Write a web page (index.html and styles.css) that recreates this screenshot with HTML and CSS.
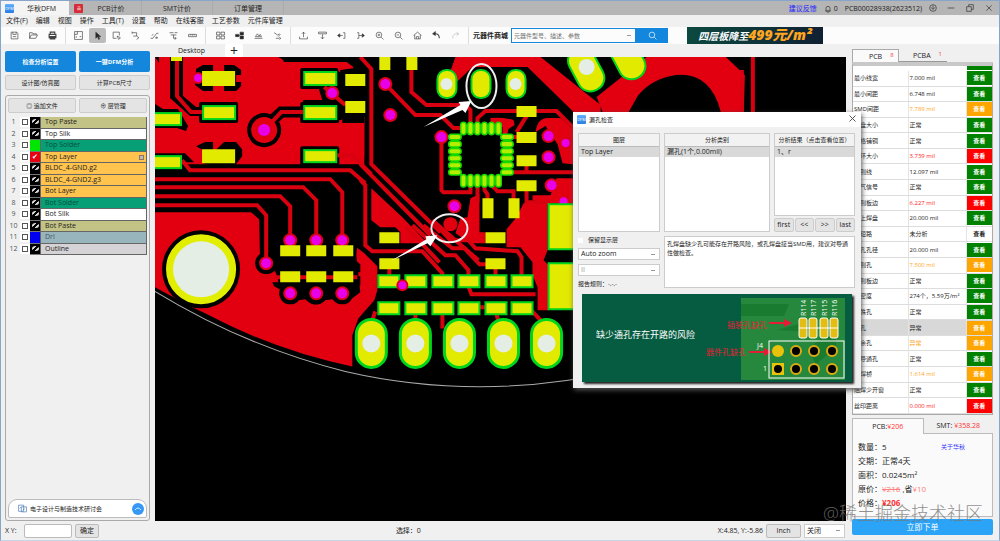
FILE: index.html
```html
<!DOCTYPE html>
<html lang="zh-CN">
<head>
    <meta charset="UTF-8">
    <meta name="viewport" content="width=device-width, initial-scale=1.0">
    <title>华秋DFM</title>
    <link rel="stylesheet" href="styles.css">
</head>
<body>
<div class="window">
    <header class="titlebar">
        <a class="tab active" href="#"><span class="logo">DFM</span><span>华秋DFM</span></a>
        <a class="tab first" href="#"><span class="logo red">品</span><span>PCB计价</span></a>
        <a class="tab" href="#">SMT计价</a>
        <a class="tab" href="#">订单管理</a>
        <div class="account">
            <a class="feedback" href="#">建议反馈</a>
            <span class="bell"><svg class="icon" viewBox="0 0 12 12"><path d="M3 9V5a3 3 0 0 1 6 0v4zM2 9h8M5 11h2"/></svg> 0</span>
            <span>PCB00028938(2623512)</span>
            <svg class="icon" viewBox="0 0 12 12"><circle cx="6" cy="6" r="5"/><path d="M3 5l3 3 3-3M6 2v6"/></svg>
        </div>
        <div class="win-buttons">
            <button aria-label="最小化"><svg class="icon" viewBox="0 0 12 12"><path d="M1 6h10"/></svg></button>
            <button aria-label="还原"><svg class="icon" viewBox="0 0 12 12"><path d="M1 4h7v7H1zM4 4V1h7v7H8"/></svg></button>
            <button aria-label="关闭"><svg class="icon" viewBox="0 0 12 12"><path d="M2 2l8 8M10 2l-8 8"/></svg></button>
        </div>
    </header>

    <nav class="menu">
        <a href="#">文件(F)</a><a href="#">编辑</a><a href="#">视图</a><a href="#">操作</a><a href="#">工具(T)</a><a href="#">设置</a><a href="#">帮助</a><a href="#">在线客服</a><a href="#">工艺参数</a><a href="#">元件库管理</a>
    </nav>

    <div class="toolbar">
        <div class="group">
            <button aria-label="保存"><svg class="icon" viewBox="0 0 16 16"><path d="M2 2h10l2 2v10H2zM5 2v4h6V2M5 10h6"/></svg></button>
            <button aria-label="打开"><svg class="icon" viewBox="0 0 16 16"><path d="M1 13V3h5l1 2h6v2M1 13l3-6h11l-3 6z"/></svg></button>
            <button aria-label="打印"><svg class="icon bold" viewBox="0 0 16 16"><path d="M4 6V2h8v4M2 6h12v6H2zM4 10h8v4H4z"/></svg></button>
        </div>
        <div class="group">
            <button aria-label="视窗"><svg class="icon" viewBox="0 0 16 16"><path d="M1 1h14v14H1zM1 6h5V1M10 10h3M4 12V9"/></svg></button>
            <button class="on" aria-label="选择"><svg class="icon" viewBox="0 0 16 16"><path class="solid" d="M5 2v11l3-3 2 5 2-1-2-4h4z"/></svg></button>
            <button aria-label="框选"><svg class="icon" viewBox="0 0 16 16"><path d="M13 8V2H2v11h6M9 9l6 3-3 3z"/></svg></button>
            <button aria-label="移动"><svg class="icon" viewBox="0 0 16 16"><path d="M2 3h8v6H4M10 9l4 3-4 3M2 1v4"/></svg></button>
            <button aria-label="测量线"><svg class="icon" viewBox="0 0 16 16"><path d="M1 13h4L12 4h3M9 12h5M12 10v4M3 8l3-2"/></svg></button>
            <button aria-label="网络"><svg class="icon" viewBox="0 0 16 16"><path d="M1 3h7M10 3h5M3 7h10M8 7v6h4M10 11l3 2-3 2"/></svg></button>
            <button aria-label="标尺"><svg class="icon" viewBox="0 0 16 16"><path d="M1 6h14v4H1zM5 6v2M8 6v2M11 6v2"/></svg></button>
        </div>
        <div class="group">
            <button aria-label="排列"><svg class="icon" viewBox="0 0 16 16"><path d="M1 2h6v5H1zM9 2h6v5H9zM1 9h6v5H1zM9 9h6v5H9z"/></svg></button>
            <button aria-label="拼板"><svg class="icon" viewBox="0 0 16 16"><path class="solid" d="M1 6h6v4H1zM9 2h6v5H9zM9 9h6v5H9z"/><path d="M7 8h2"/></svg></button>
            <button aria-label="阻抗"><svg class="icon" viewBox="0 0 16 16"><path d="M1 13h14M2 10h12M3 9l3-4 3 4 2-3 2 3"/></svg></button>
            <button aria-label="对比"><svg class="icon" viewBox="0 0 16 16"><path d="M2 3l6 4 4-2M9 10l4-4M5 13h6M11 11l3 2-3 2"/></svg></button>
        </div>
        <div class="group">
            <button aria-label="上移"><svg class="icon" viewBox="0 0 16 16"><path d="M1 10v4h14v-4M8 11V2M5 5l3-3 3 3"/></svg></button>
            <button aria-label="下移"><svg class="icon" viewBox="0 0 16 16"><path d="M1 2h14v3H1zM8 6v8M5 11l3 3 3-3"/></svg></button>
            <button aria-label="左移"><svg class="icon" viewBox="0 0 16 16"><path class="solid" d="M1 8l4-3v6z"/><path d="M4 8h6M11 3h3v10h-3"/></svg></button>
            <button aria-label="右移"><svg class="icon" viewBox="0 0 16 16"><path class="solid" d="M15 8l-4-3v6z"/><path d="M5 8h6M2 3h3v10H2"/></svg></button>
            <button aria-label="放大"><svg class="icon" viewBox="0 0 16 16"><circle cx="7" cy="7" r="5"/><path d="M11 11l4 4M7 5v4M5 7h4"/></svg></button>
            <button aria-label="缩小"><svg class="icon" viewBox="0 0 16 16"><circle cx="7" cy="7" r="5"/><path d="M11 11l4 4M5 7h4"/></svg></button>
            <button aria-label="主页"><svg class="icon" viewBox="0 0 16 16"><path d="M1 8l7-6 7 6M3 7v7h10V7M6 14v-4h4v4"/></svg></button>
            <button aria-label="撤销"><svg class="icon" viewBox="0 0 16 16"><path class="solid" d="M1 5l5-4v7z"/><path class="thick" d="M4 5c6-1 9 2 9 8"/></svg></button>
            <button aria-label="重做"><svg class="icon pale" viewBox="0 0 16 16"><path d="M10 2l4 3-4 3M13 5C6 4 3 7 3 13"/></svg></button>
        </div>
        <form class="search">
            <label for="part">元器件商城</label>
            <span class="search-box"><input id="part" type="text" placeholder="元器件型号、描述、参数"></span>
            <button type="button" aria-label="搜索"><svg class="icon" viewBox="0 0 16 16"><circle cx="7" cy="7" r="5"/><path d="M11 11l4 4"/></svg></button>
        </form>
        <a class="promo" href="#">四层板降至<b>499元/m²</b></a>
    </div>

    <main class="main">
        <aside class="left">
            <div class="pair primary"><button>检查分析设置</button><button>一键DFM分析</button></div>
            <div class="pair"><button>设计图/仿真图</button><button>计算PCB尺寸</button></div>
            <section class="layers">
                <div class="pair"><button>◎ 追加文件</button><button>⊕ 层管理</button></div>
                <ol class="layer-list">
                    <li><span>1</span><input type="checkbox" aria-label="Top Paste"><i class="eye"></i><b class="paste">Top Paste</b></li>
                    <li><span>2</span><input type="checkbox" aria-label="Top Silk"><i class="eye"></i><b>Top Silk</b></li>
                    <li><span>3</span><input type="checkbox" aria-label="Top Solder"><i class="green"></i><b class="solder">Top Solder</b></li>
                    <li><span>4</span><input type="checkbox" aria-label="Top Layer"><i class="red">✔</i><b class="copper">Top Layer<em></em></b></li>
                    <li><span>5</span><input type="checkbox" aria-label="BLDC_4-GND.g2"><i class="eye"></i><b class="copper">BLDC_4-GND.g2</b></li>
                    <li><span>6</span><input type="checkbox" aria-label="BLDC_4-GND2.g3"><i class="eye"></i><b class="copper">BLDC_4-GND2.g3</b></li>
                    <li><span>7</span><input type="checkbox" aria-label="Bot Layer"><i class="eye"></i><b class="copper">Bot Layer</b></li>
                    <li><span>8</span><input type="checkbox" aria-label="Bot Solder"><i class="eye"></i><b class="solder">Bot Solder</b></li>
                    <li><span>9</span><input type="checkbox" aria-label="Bot Silk"><i class="eye"></i><b>Bot Silk</b></li>
                    <li><span>10</span><input type="checkbox" aria-label="Bot Paste"><i class="eye"></i><b class="paste">Bot Paste</b></li>
                    <li><span>11</span><input type="checkbox" aria-label="Drl"><i class="blue"></i><b class="drill">Drl</b></li>
                    <li><span>12</span><input type="checkbox" aria-label="Outline"><i class="eye"></i><b class="outline">Outline</b></li>
                </ol>
                <a class="notice" href="#">
                    <svg class="icon" viewBox="0 0 16 16"><path d="M1 2h9v11H1zM6 5h9v9H6zM3 8l3-3M9 11l3-3"/></svg>
                    <span>电子设计与制造技术研讨会</span>
                    <svg class="up" viewBox="0 0 12 12"><circle cx="6" cy="6" r="6"/><path d="M3 7q3-4 6 0"/></svg>
                </a>
            </section>
        </aside>

        <section class="work">
            <div class="desk-tabs"><a href="#">Desktop</a><button aria-label="新建">+</button></div>
            <svg class="board" viewBox="155 57 690 464" preserveAspectRatio="xMinYMin slice">
                <rect x="155" y="57" width="690" height="464"/>
                <!-- copper pour -->
                <g class="cu">
                    <path d="M155 57H278L286 61H345L353 67V73H341L336 70H303L302 87H318L322 100H303L301 120H341L345 116H364V165H155zM155 212H251L260 220V257Q253 264 260 271L275 271 279 282 283 297Q290 307 298 300L305 299Q315 309 325 300L332 299Q342 309 352 298L360 292 357 264 355 246 364 253 377 266V290L374 300 358 318 352 335V366Q275 350 205 313L190 306 155 287z"/>
                    <path d="M371 188L402 217 427 243H400V232L395 227H380L371 220z"/>
                    <path d="M470 198L479 194V232H485V243H470L455 233 460 218 467 217z"/>
                    <path d="M523 203H547V250L543 260 548 265V310H537V287L532 275V262L520 247H506V229L516 217z"/>
                    <path d="M556 178H573V203H545L532 200V195H550z"/>
                    <path d="M455 57H540L600 105V112H573L527 67H472L450 88H444z"/>
                    <path d="M535 132Q537 118 547 118H560L573 130V164L562 163 557 144 545 126z"/>
                    <path d="M573 92L600 112H573zM646 57H725L744 75 743 112H720Q710 72 675 75 650 79 637 96L628 112H602L596 97z"/>
                    <path d="M360 117H364V155H360zM490 118Q502 117 513 120L514 125 508 129 506 137H502V127L490 125z"/>
                </g>
                <!-- clearances -->
                <g class="gap">
                    <path d="M170 57H183V96L196 107H203V116H190L170 98zM155 104L163 109H178L188 126 186 131 177 128H155zM155 57H159V63zM155 153H185L194 162H155zM196 69L203 65H213V72H202V85H213V91H203L195 85zM224 65H234L241 70V75H236V82H241V86L236 91H224zM196 146L205 151H213V142H205zM224 142H236L242 149V156L235 165H212L202 163z"/>
                    <rect x="199" y="102" width="39" height="21" rx="2"/><rect x="300" y="68" width="38" height="21" rx="2"/><rect x="300" y="102" width="39" height="21" rx="2"/><rect x="300" y="146" width="39" height="20" rx="2"/>
                    <path d="M281 57H355L364 65V123H342V116L349 110 335 99 340 88V70L355 68 350 62H284zM155 164H360L365 173V251L357 247 355 260 360 264V272H345V276H360V285L350 291H283L274 286 272 282H278V260L260 268 259 216 252 210H155z"/>
                    <circle cx="264" cy="130" r="17"/><circle cx="266" cy="263" r="11"/><circle cx="201" cy="269" r="39"/>
                    <circle cx="290" cy="293" r="11"/><circle cx="316" cy="293" r="11"/><circle cx="342" cy="293" r="11"/>
                    <path class="edge" d="M268 124L281 112H300"/>
                </g>
                <g class="trace">
                    <path d="M177 57V96L191 112H203M182 160L190 170H350L365 183M155 179H330L342 192V238M155 187H303L316 200V238M155 196H280L290 206V238M155 205H257L266 215V260M337 155H352L371 174M268 126L281 112H303M324 87L345 105"/>
                    <path d="M360 57L371 69V164L440 232M360 164L430 235M360 180L365 185V245L372 251H422L442 273V280"/>
                    <path d="M385 84L415 115H440L453 128H462M411 70V92L426 105H465L470 110V124M477 124V118L485 111H556L573 128M441 137V190L443 192H470V180M477 183V202M484 183V190L487 194V202M491 185L497 191H513V201M506 137H520M510 172H573M441 137H455"/>
                    <path d="M526 116L516 132M526 162V172M526 190V202H550M389 242V235M389 268V276M495 268V276M412 225L445 255H455L468 270V277M423 225L452 248H464L479 264H488M436 225L450 240H468L475 248L517 251 521 257V278M468 286L471 294H535M475 307H486M372 320L375 311M415 305V322M442 305V328M494 305L498 322M527 306L543 323"/>
                    <path d="M432 220L478 260M405 226L439 262M741 70V112M752 57V112"/>
                    <path d="M357 277H275M270 277L260 275"/>
                </g>
                <!-- vias -->
                <circle class="cu" cx="264" cy="130" r="13"/>
                <g class="via">
                    <circle cx="264" cy="130" r="6"/><circle cx="266" cy="263" r="5"/><circle cx="290" cy="240" r="5"/><circle cx="316" cy="240" r="5"/><circle cx="342" cy="240" r="5"/>
                    <circle cx="290" cy="293" r="5"/><circle cx="316" cy="293" r="5"/><circle cx="342" cy="293" r="5"/><circle cx="198" cy="78" r="4"/><circle cx="332" cy="93" r="5"/>
                    <circle cx="385" cy="84" r="5"/><circle cx="390" cy="115" r="5"/><circle cx="441" cy="137" r="5"/><circle cx="454" cy="206" r="5"/><circle cx="548" cy="136" r="5"/><circle cx="548" cy="157" r="5"/><circle cx="551" cy="185" r="5"/><circle cx="565" cy="143" r="4"/><circle cx="563" cy="201" r="4"/>
                </g>
                <g class="pad">
                    <path d="M171 57h11v4h-11zM202 71h33v15h-33zM202 149h33v14h-33zM345 74h20v12h-20zM345 101h20v12h-20zM280 245h20v11h-20zM306 245h20v11h-20zM333 245h20v11h-20zM280 271h20v11h-20zM306 271h20v11h-20zM333 271h20v11h-20z"/>
                    <path d="M379 57h11v13h-11zM406 57h11v13h-11zM516 106h20v11h-20zM516 132h20v11h-20zM516 155h20v11h-20zM516 180h20v11h-20zM482 198h11v20h-11zM508 198h11v20h-11zM379 232h20v11h-20zM485 232h20v11h-20zM379 258h20v11h-20zM485 258h20v11h-20z"/>
                </g>
                <g class="pad masked">
                    <rect x="203" y="106" width="32" height="13"/><rect x="304" y="72" width="32" height="13"/><rect x="304" y="106" width="32" height="13"/><rect x="304" y="150" width="32" height="12"/><rect x="150" y="113" width="31" height="12"/><rect x="150" y="156" width="31" height="12"/>
                    <path d="M378 275h21v12h-21zM405 275h21v12h-21zM432 275h21v12h-21zM458 275h21v12h-21zM485 275h21v12h-21zM511 275h21v12h-21zM378 302h21v12h-21zM405 302h21v12h-21zM432 302h21v12h-21zM458 302h21v12h-21zM485 302h21v12h-21zM511 302h21v12h-21zM548 204h40v45h-40zM548 263h40v46h-40z"/>
                    <rect x="437" y="70" width="19" height="28" rx="9"/><rect x="471" y="70" width="19" height="28" rx="9"/><rect x="506" y="70" width="19" height="28" rx="9"/>
                    <rect x="572" y="46" width="27" height="46" rx="13" transform="rotate(-28 586 69)"/><rect x="613" y="34" width="27" height="46" rx="13" transform="rotate(-28 627 57)"/>
                </g>
                <g class="pad masked large">
                    <rect x="356" y="319" width="30" height="48" rx="15"/><rect x="400" y="319" width="30" height="48" rx="15"/><rect x="444" y="319" width="30" height="48" rx="15"/><rect x="488" y="319" width="30" height="48" rx="15"/><rect x="531" y="319" width="30" height="48" rx="15"/>
                </g>
                <g class="via"><circle cx="402" cy="285" r="4"/></g>
                <!-- QFN pins -->
                <g class="pins">
                    <path d="M463 125v7M470 125v7M477 125v7M484 125v7M491 125v7M498 125v7M463 177v7M470 177v7M477 177v7M484 177v7M491 177v7M498 177v7M451 137h7M451 144h7M451 151h7M451 158h7M451 165h7M451 172h7M503 137h7M503 144h7M503 151h7M503 158h7M503 165h7M503 172h7"/>
                    <path class="core" d="M463 125v7M470 125v7M477 125v7M484 125v7M491 125v7M498 125v7M463 177v7M470 177v7M477 177v7M484 177v7M491 177v7M498 177v7M451 137h7M451 144h7M451 151h7M451 158h7M451 165h7M451 172h7M503 137h7M503 144h7M503 151h7M503 158h7M503 165h7M503 172h7"/>
                </g>
                <circle class="ring" cx="201" cy="269" r="31"/>
                <g class="hole">
                    <circle cx="201" cy="269" r="28"/><circle cx="446" cy="84" r="6"/><circle cx="515" cy="84" r="6"/><circle cx="586" cy="67" r="8"/>
                    <circle cx="371" cy="343" r="9"/><circle cx="415" cy="343" r="9"/><circle cx="459" cy="343" r="9"/><circle cx="503" cy="343" r="9"/><circle cx="546" cy="343" r="9"/>
                </g>
                <circle class="cu" cx="450" cy="224" r="7"/>
                <path class="contour" d="M155 291Q245 346 345 371 480 402 620 370"/>
                <g class="mark">
                    <ellipse cx="481" cy="86" rx="15" ry="22"/><ellipse cx="449" cy="228" rx="18" ry="14"/>
                    <path d="M423 127L462 110 465 113 471 101 458 102 460 105zM390 261L427 243 430 246 437 235 425 236 426 239z"/>
                </g>
            </svg>
        </section>

        <aside class="right">
            <div class="result-tabs"><a class="active" href="#">PCB<sup>8</sup></a><a href="#">PCBA<sup>1</sup></a></div>
            <div class="results">
                <table>
                    <tr><td>最小线宽</td><td>7.000 mil</td><td><button>查看</button></td></tr>
                    <tr><td>最小间距</td><td>6.748 mil</td><td><button>查看</button></td></tr>
                    <tr class="warn"><td>SMD间距</td><td>7.789 mil</td><td><button>查看</button></td></tr>
                    <tr><td>焊盘大小</td><td>正常</td><td><button>查看</button></td></tr>
                    <tr><td>网格铺铜</td><td>正常</td><td><button>查看</button></td></tr>
                    <tr class="bad"><td>孔环大小</td><td>3.739 mil</td><td><button>查看</button></td></tr>
                    <tr><td>孔到线</td><td>12.097 mil</td><td><button>查看</button></td></tr>
                    <tr><td>电气信号</td><td>正常</td><td><button>查看</button></td></tr>
                    <tr class="bad"><td>铜到板边</td><td>6.227 mil</td><td><button>查看</button></td></tr>
                    <tr><td>孔上焊盘</td><td>20.000 mil</td><td><button>查看</button></td></tr>
                    <tr class="none"><td>开短路</td><td>未分析</td><td><button>查看</button></td></tr>
                    <tr><td>钻孔孔径</td><td>20.000 mil</td><td><button>查看</button></td></tr>
                    <tr class="warn"><td>孔到孔</td><td>7.500 mil</td><td><button>查看</button></td></tr>
                    <tr><td>孔到板边</td><td>正常</td><td><button>查看</button></td></tr>
                    <tr><td>孔密度</td><td>274个，5.59万/m²</td><td><button>查看</button></td></tr>
                    <tr><td>特殊孔</td><td>正常</td><td><button>查看</button></td></tr>
                    <tr class="warn current"><td>漏孔</td><td>异常</td><td><button>查看</button></td></tr>
                    <tr class="warn"><td>多余孔</td><td>异常</td><td><button>查看</button></td></tr>
                    <tr><td>非导通孔</td><td>正常</td><td><button>查看</button></td></tr>
                    <tr class="warn"><td>阻焊桥</td><td>1.614 mil</td><td><button>查看</button></td></tr>
                    <tr><td>阻焊少开窗</td><td>正常</td><td><button>查看</button></td></tr>
                    <tr class="bad"><td>丝印距离</td><td>0.000 mil</td><td><button>查看</button></td></tr>
                </table>
            </div>
            <div class="price-tabs"><a class="active" href="#">PCB:<span>¥206</span></a><a href="#">SMT: <span>¥358.28</span></a></div>
            <div class="price">
                <a href="#">关于华秋</a>
                <p>数量：5</p>
                <p>交期：正常4天</p>
                <p>面积：0.0245m²</p>
                <p>原价：<s>¥216</s> ,省<span>¥10</span></p>
                <p>价格：<b>¥206</b></p>
            </div>
            <button class="order">立即下单</button>
        </aside>
    </main>

    <footer class="status">
        <label for="xy">X Y:</label><input id="xy" type="text"><button>确定</button>
        <span class="picked">选择：0</span>
        <span class="coords">X:4.85, Y:-5.86</span>
        <button class="unit">Inch</button>
        <select aria-label="捕捉"><option>关闭</option></select>
    </footer>

    <div class="dialog" role="dialog" aria-labelledby="dialog-title">
        <div class="dialog-title"><span class="logo">DFM</span><span id="dialog-title">漏孔检查</span><button aria-label="关闭"><svg class="icon" viewBox="0 0 12 12"><path d="M2 2l8 8M10 2l-8 8"/></svg></button></div>
        <div class="dialog-body">
            <div class="lists">
                <div class="list"><h3>图层</h3><p>Top Layer</p></div>
                <div class="list"><h3>分析类别</h3><p>漏孔(1个,0.00mil)</p></div>
                <div class="list-col">
                    <div class="list"><h3>分析结果（点击查看位置）</h3><p>1、r</p></div>
                    <div class="pager"><button>first</button><button>&lt;&lt;</button><button>&gt;&gt;</button><button>last</button></div>
                </div>
            </div>
            <div class="options">
                <div class="fields">
                    <label><input type="checkbox"> 保留显示层</label>
                    <select aria-label="缩放"><option>Auto zoom</option></select>
                    <select class="dim" aria-label="编号"><option>II</option></select>
                    <span>报告规则：-,-,-</span>
                </div>
                <p class="hint">孔焊盘缺少孔可能存在开路风险，或孔焊盘接当SMD用，建议对导通性做检查。</p>
            </div>
            <svg class="sample" viewBox="0 0 270 88">
                <rect class="dark" width="270" height="88"/>
                <rect class="light" x="159" y="4" width="104" height="82"/>
                <path class="shade" d="M159 10h48l-5 12h-43zM195 36l28-8 6 10M226 56l8 14 20-16V30"/>
                <text class="white" x="14" y="44" font-size="9">缺少通孔存在开路的风险</text>
                <g class="crimson">
                    <text x="145" y="34" font-size="8">插装孔缺孔</text><text x="124" y="61" font-size="8">器件孔缺孔</text>
                    <path d="M187 28h15v-3l8 4-8 4v-3h-15zM167 57h15v-3l8 4-8 4v-3h-15z"/>
                </g>
                <g class="white">
                    <text font-size="7" transform="translate(224 22) rotate(-90)">R114</text><text font-size="7" transform="translate(234 22) rotate(-90)">R117</text><text font-size="7" transform="translate(245 22) rotate(-90)">R115</text><text font-size="7" transform="translate(255 22) rotate(-90)">R116</text>
                    <text x="175" y="54" font-size="7">J4</text><text x="181" y="77" font-size="7">1</text>
                </g>
                <g class="chip">
                    <rect x="217" y="24" width="8" height="20" rx="2"/><rect x="227" y="24" width="8" height="20" rx="2"/><rect x="238" y="24" width="8" height="20" rx="2"/><rect x="248" y="24" width="8" height="20" rx="2"/>
                    <path d="M217 34h39"/>
                </g>
                <rect class="frame" x="187" y="47" width="75" height="37"/>
                <circle class="gold" cx="196" cy="57" r="6"/><path class="gold" d="M190 69h12v12h-12z"/><circle cx="196" cy="75" r="4"/>
                <g class="thru"><circle cx="214" cy="57" r="5"/><circle cx="232" cy="57" r="5"/><circle cx="250" cy="57" r="5"/><circle cx="214" cy="75" r="5"/><circle cx="232" cy="75" r="5"/><circle cx="250" cy="75" r="5"/></g>
            </svg>
        </div>
    </div>
    <div class="watermark">@稀土掘金技术社区</div>
</div>
</body>
</html>
```
FILE: styles.css
```css
* {
    box-sizing: border-box;
}
body {
    margin: 0;
    font-family: "Open Sans", "Noto Sans CJK SC", sans-serif;
    font-size: 7px;
    line-height: 10px;
    color: #222;
}
button, input, select {
    font: inherit;
    color: inherit;
    margin: 0;
    padding: 0;
}
button {
    border: 1px solid #ccc;
    border-radius: 2px;
    background: #e4e4e4;
    white-space: nowrap;
}
a {
    color: inherit;
    text-decoration: none;
}
p, h3 {
    margin: 0;
    font-weight: normal;
}
select {
    appearance: none;
    border: 1px solid #ccc;
    padding: 0 2px;
    font-size: 7px;
    background: #fff linear-gradient(#999, #999) right 4px center / 4px 1px no-repeat;
}
.window {
    position: relative;
    display: flex;
    flex-direction: column;
    height: 100vh;
    background: #f0f0f0;
    border: 1px solid #87a5c8;
    border-bottom-color: #c5d5ea;
    overflow: hidden;
}
.icon {
    width: 9px;
    height: 9px;
    fill: none;
    stroke: #444;
    stroke-width: 1.2;
}
.icon .solid {
    fill: #222;
}
.icon .thick, .icon.bold {
    stroke-width: 2;
}
.icon.pale {
    stroke: #bbb;
}
.logo {
    width: 9px;
    height: 9px;
    border-radius: 1px;
    background: linear-gradient(#61b1ff, #287be0);
    color: #fff;
    font-size: 4px;
    line-height: 9px;
    text-align: center;
    flex: none;
}
.logo.red {
    background: #d62b38;
}

/* title bar and menu */
.titlebar {
    display: flex;
    flex: none;
    height: 14px;
    background: #b5b5b5;
    line-height: 13px;
}
.tab {
    display: flex;
    align-items: center;
    justify-content: center;
    width: 71px;
    border-right: 1px solid #aaa;
}
.tab.active {
    width: 68px;
    gap: 13px;
    padding-right: 9px;
    background: #f4f4f4;
    border: 0;
}
.tab.first {
    width: 73px;
    gap: 14px;
    padding-right: 11px;
}
.account {
    display: flex;
    align-items: center;
    gap: 7px;
    margin-left: auto;
}
.account .icon, .win-buttons .icon {
    width: 8px;
    height: 8px;
    display: inline-block;
    vertical-align: middle;
}
.feedback {
    color: #2222ff;
}
.win-buttons {
    display: flex;
    gap: 11px;
    padding: 0 6px 0 10px;
}
.win-buttons button, .dialog-title button {
    border: 0;
    background: none;
    line-height: 8px;
}
.menu {
    display: flex;
    flex: none;
    gap: 8px;
    height: 12px;
    padding: 0 5px;
    line-height: 12px;
}

/* toolbar */
.toolbar {
    display: flex;
    flex: none;
    height: 17px;
    background: #fcfcfc;
}
.group {
    display: flex;
    gap: 2px;
    padding: 1px 4px 1px 5px;
    border-right: 1px solid #ddd;
}
.group + .group {
    padding-left: 4px;
}
.group:nth-child(3) {
    padding-left: 6px;
}
.group button {
    display: flex;
    align-items: center;
    justify-content: center;
    width: 17px;
    border: 0;
    background: none;
}
.group button.on {
    background: #bcbcbc;
}
.search {
    display: flex;
    align-items: center;
    padding: 1px 0 1px 4px;
}
.search label {
    width: 38px;
    font-weight: bold;
    white-space: nowrap;
}
.search-box {
    width: 125px;
    height: 15px;
    border: 1px solid #1487dd;
    background: linear-gradient(#999, #999) right 4px center / 4px 1px no-repeat;
}
.search-box input {
    display: block;
    width: 100%;
    height: 13px;
    border: 0;
    padding: 0 2px;
    background: none;
    font-size: 6px;
}
.search button {
    width: 32px;
    height: 15px;
    border: 0;
    border-radius: 0;
    background: #1287dd;
}
.search .icon {
    display: block;
    margin: auto;
    stroke: #fff;
}
.promo {
    width: 136px;
    margin-left: 19px;
    background: linear-gradient(90deg, #0c4940, #102033);
    color: #fff;
    text-align: center;
    font-size: 10px;
    font-style: italic;
    font-weight: bold;
    line-height: 15px;
    white-space: nowrap;
}
.promo b {
    color: #ffa51f;
    font-size: 14px;
}

/* left column */
.main {
    display: flex;
    flex: 1;
    min-height: 0;
}
.left {
    display: flex;
    flex-direction: column;
    gap: 3px;
    width: 154px;
    padding: 7px 5px 0 4px;
}
.pair {
    display: grid;
    grid-template-columns: 1fr 1fr;
    gap: 3px;
    flex: none;
}
.pair button {
    height: 15px;
    font-size: 6px;
}
.primary button {
    height: 21px;
    border: 0;
    background: #1487dc;
    color: #fff;
    font-weight: bold;
}
.layers {
    display: flex;
    flex: 1;
    flex-direction: column;
    margin-top: 2px;
    padding: 2px;
    border: 1px solid #aaa;
    border-radius: 3px;
}
.layer-list {
    display: grid;
    grid-template-rows: repeat(12, 1fr);
    height: 138px;
    margin: 4px 0 0;
    padding: 0;
    list-style: none;
}
.layer-list li {
    display: grid;
    grid-template-columns: 11px 11px 10px 1fr;
    align-items: stretch;
    line-height: 10px;
}
.layer-list span {
    text-align: center;
    color: #555;
}
.layer-list input {
    appearance: none;
    border: 1px solid #555;
    outline: 2px solid #fff;
    outline-offset: 0;
    background: #fff;
    width: 6px;
    height: 6px;
    margin: 2px 3px;
}
.layer-list i {
    background: #000;
    color: #fff;
    font-style: normal;
    text-align: center;
    border-bottom: 1px solid #777;
}
.eye::after {
    content: "";
    display: block;
    width: 7px;
    height: 5px;
    margin: 2px auto;
    border-radius: 50%;
    background: linear-gradient(135deg, #ddd 40%, #000 40%, #000 60%, #ddd 60%);
}
.layer-list .green { background: #00e600; }
.layer-list .red { background: #e60012; }
.layer-list .blue { background: #00e; }
.layer-list b {
    padding-left: 4px;
    border: 1px solid #666;
    border-top: 0;
    background: #fff;
    font-weight: normal;
}
.layer-list .paste { background: #c2c384; }
.layer-list .solder { background: #079f76; color: #064d3c; }
.layer-list .copper { background: #ffc34e; }
.layer-list .drill { background: #98b4bc; color: #456; }
.layer-list .outline { background: #d6d3d6; }
.layer-list em {
    float: right;
    width: 5px;
    height: 5px;
    margin: 3px 2px 0;
    border: 1px solid #876;
    background: #bbb;
}
.notice {
    display: flex;
    align-items: center;
    gap: 3px;
    height: 19px;
    margin-top: auto;
    padding: 0 2px 0 9px;
    background: #fff;
    border: 1px solid #bbb;
    border-radius: 9px 9px 2px 2px;
    font-size: 6px;
}
.notice .icon {
    stroke: #4779b8;
}
.up {
    width: 12px;
    height: 12px;
    margin-left: auto;
    fill: #3598f5;
}
.up path {
    fill: none;
    stroke: #d8ecff;
}

/* board view */
.work {
    display: flex;
    flex: 1;
    flex-direction: column;
    min-width: 0;
}
.desk-tabs {
    display: flex;
    flex: none;
    height: 13px;
    padding-left: 23px;
    line-height: 14px;
}
.desk-tabs a {
    width: 47px;
}
.desk-tabs button {
    width: 18px;
    border: 0;
    background: #fff;
    font-size: 14px;
    line-height: 12px;
}
.board {
    flex: 1;
    width: 100%;
    min-height: 0;
    background: #000;
}
.cu {
    fill: #e20010;
}
.gap .edge {
    fill: none;
    stroke: #000;
    stroke-width: 11;
}
.trace {
    fill: none;
    stroke: #d9000f;
    stroke-width: 4;
}
.via {
    fill: #e800e8;
    stroke: #dc0018;
    stroke-width: 4;
    paint-order: stroke;
}
.pad {
    fill: #e2ea00;
}
.masked {
    stroke: #00d51d;
    stroke-width: 2;
}
.large {
    stroke-width: 3;
}
.pins path {
    fill: none;
    stroke: #13d800;
    stroke-width: 7;
    stroke-linecap: round;
}
.pins .core {
    stroke: #b5ed00;
    stroke-width: 4;
}
.ring {
    fill: none;
    stroke: #e2ee00;
    stroke-width: 8;
}
.hole {
    fill: #e4eee4;
}
.contour {
    fill: none;
    stroke: #aaa;
    stroke-width: 1;
}
.mark {
    fill: #fff;
}
.mark ellipse {
    fill: none;
    stroke: #eee;
    stroke-width: 2;
}

/* results */
.right {
    display: flex;
    flex-direction: column;
    width: 153px;
    padding: 5px 6px 0 6px;
}
.result-tabs {
    display: flex;
    flex: none;
    height: 13px;
    line-height: 14px;
}
.result-tabs a {
    width: 48px;
    padding-left: 14px;
    border-bottom: 1px solid #999;
}
.result-tabs .active {
    width: 47px;
    padding-left: 16px;
    border: 1px solid #aaa;
    border-bottom: 0;
    background: #fafafa;
}
.result-tabs sup {
    margin-left: 8px;
    color: #f33;
    line-height: 0;
    vertical-align: 2px;
}
.results {
    flex: 1;
    min-height: 0;
    padding-top: 5px;
    border: 1px solid #aaa;
    border-top: 4px solid #c8c8c8;
    background: linear-gradient(90deg, #fff 114px, #008200 114px) top / 100% 4px no-repeat, #fff;
}
.results table {
    width: 100%;
    height: 100%;
    table-layout: fixed;
    border-collapse: collapse;
    font-size: 6px;
    line-height: 10px;
}
.results td {
    padding: 0 1px;
    border-bottom: 1px solid #ddd;
    border-right: 1px solid #e4e4e4;
    white-space: nowrap;
}
.results td:first-child {
    width: 55px;
}
.results td:last-child {
    width: 26px;
    padding: 0;
    border-right: 0;
}
.results button {
    display: block;
    width: 100%;
    height: 14px;
    border: 0;
    border-radius: 0;
    background: #008200;
    color: #fff;
    font-weight: bold;
}
.warn td:nth-child(2) { color: #ffa51f; }
.warn button { background: #ffa500; }
.bad td:nth-child(2) { color: #f22; }
.bad button { background: #f00; }
.none button { background: #fff; color: #222; }
.results .current td { background: #d8d8d8; color: #222; }
.price-tabs {
    display: flex;
    flex: none;
    height: 16px;
    margin-top: 3px;
    line-height: 16px;
    text-align: center;
}
.price-tabs a {
    flex: 1;
    border-bottom: 1px solid #bbb;
}
.price-tabs .active {
    border: 1px solid #bbb;
    border-bottom: 0;
    background: #fafafa;
}
.price-tabs span, .price span, .price b {
    color: #f33;
}
.price {
    flex: none;
    padding: 6px 5px;
    border: 1px solid #bbb;
    border-top: 0;
    background: #fafafa;
    font-size: 8px;
    line-height: 14px;
}
.price a {
    float: right;
    margin-right: 22px;
    color: #33f;
    font-size: 6px;
}
.price s, .price span {
    color: #ff8080;
}
.order {
    flex: none;
    height: 16px;
    margin: 2px 0 -14px;
    border: 0;
    background: #2ba3f7;
    color: #fff;
    font-size: 8px;
    z-index: 1;
}

/* status bar */
.status {
    display: flex;
    flex: none;
    align-items: center;
    gap: 3px;
    height: 19px;
    padding-left: 4px;
    padding-right: 154px;
}
.status label {
    width: 16px;
}
.status input {
    width: 48px;
    height: 14px;
    border: 1px solid #bbb;
    border-radius: 2px;
}
.status button {
    width: 24px;
    height: 14px;
    border-color: #bbb;
}
.status .unit {
    width: 35px;
}
.status select {
    width: 41px;
    height: 14px;
}
.picked {
    margin: 0 auto;
}

/* check dialog */
.dialog {
    position: absolute;
    top: 111px;
    right: 138px;
    width: 288px;
    background: #f0f0f0;
    box-shadow: 1px 2px 5px #555;
}
.dialog-title {
    display: flex;
    align-items: center;
    gap: 3px;
    height: 15px;
    padding: 0 4px;
    background: #fff;
}
.dialog-title span {
    font-size: 6px;
}
.dialog-title .logo {
    font-size: 4px;
}
.dialog-title button {
    margin-left: auto;
}
.dialog-body {
    padding: 6px 6px 6px 5px;
}
.lists {
    display: grid;
    grid-template-columns: 82px 1fr 81px;
    gap: 4px;
    height: 99px;
}
.list {
    flex: 1;
    border: 1px solid #ccc;
    background: #fff;
}
.list h3 {
    height: 13px;
    border-bottom: 1px solid #bbb;
    background: #f2f2f2;
    font-size: 6px;
    line-height: 12px;
    text-align: center;
    white-space: nowrap;
}
.list p {
    padding-left: 2px;
    background: #d9d9d9;
}
.list-col {
    display: flex;
    flex-direction: column;
    gap: 2px;
    min-width: 0;
}
.pager {
    display: grid;
    grid-template-columns: repeat(4, 1fr);
    gap: 1px;
}
.pager button {
    height: 14px;
}
.options {
    display: grid;
    grid-template-columns: 82px 1fr;
    gap: 4px;
    margin-top: 4px;
}
.fields {
    display: flex;
    flex-direction: column;
    gap: 4px;
}
.fields label {
    display: flex;
    align-items: center;
    gap: 5px;
    height: 8px;
    font-size: 6px;
}
.fields label input {
    appearance: none;
    width: 5px;
    height: 5px;
    background: #fff;
}
.fields select {
    width: 100%;
    height: 12px;
}
.fields .dim {
    color: #999;
}
.fields span {
    height: 8px;
    font-size: 6px;
    line-height: 8px;
}
.hint {
    padding: 3px 2px;
    border: 1px solid #ccc;
    background: #fff;
    font-size: 6px;
    line-height: 9px;
}
.sample {
    display: block;
    width: 270px;
    margin: 6px 0 0 4px;
    box-shadow: 2px 2px 2px #222;
}
.dark { fill: #065c40; }
.light { fill: #25883d; }
.shade { fill: #127326; fill-opacity: 0.6; }
.white { fill: #fff; }
.crimson { fill: #e51c35; }
.gold { fill: #e9c20c; }
.chip {
    fill: #e3bd14;
    stroke: #fff;
    stroke-width: 1;
}
.frame {
    fill: none;
    stroke: #fff;
    stroke-width: 1;
}
.thru {
    stroke: #dbab12;
    stroke-width: 2;
}
.watermark {
    position: absolute;
    right: 16px;
    bottom: 14px;
    color: #777;
    opacity: 0.8;
    font-size: 18px;
    line-height: 26px;
    font-weight: 300;
    pointer-events: none;
    z-index: 2;
}
```
